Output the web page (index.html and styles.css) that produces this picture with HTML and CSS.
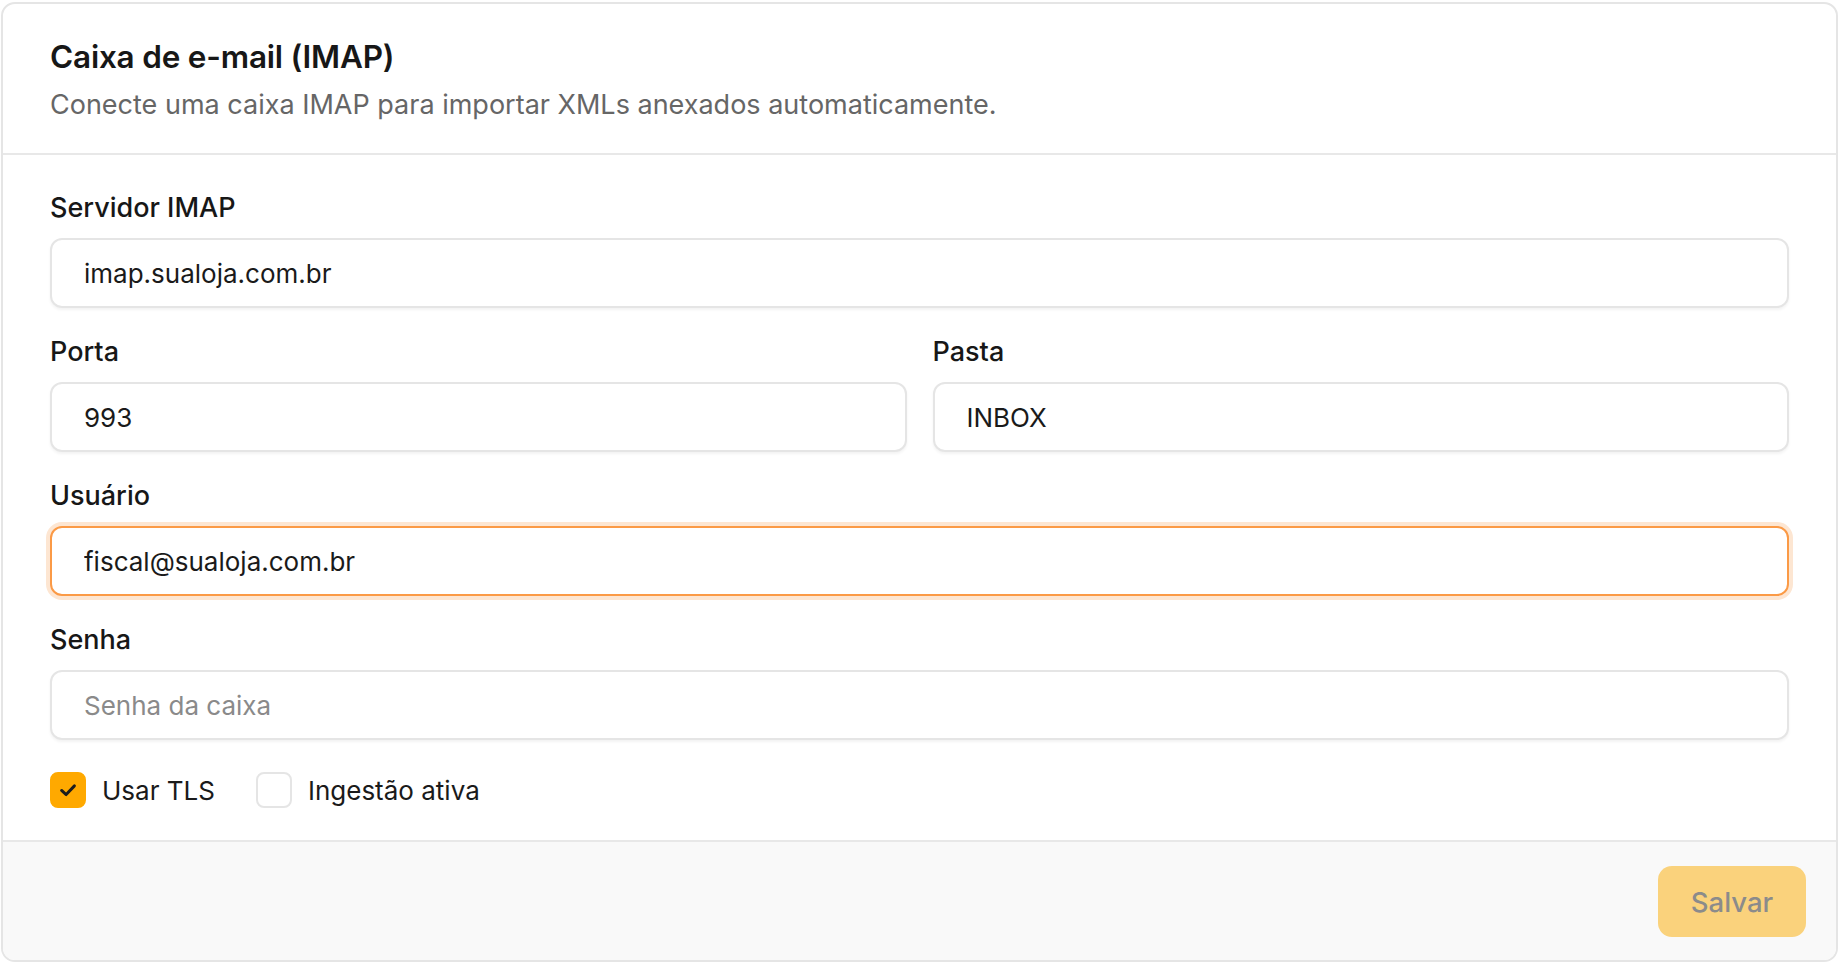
FILE: index.html
```html
<!DOCTYPE html>
<html lang="pt-BR">
	<head>
		<meta charset="UTF-8" />
		<meta name="viewport" content="width=device-width, initial-scale=1.0" />
		<title>Caixa de e-mail (IMAP)</title>
		<link rel="stylesheet" href="styles.css">
	</head>
	<body>
		<form class="card">
			<header class="card-header">
				<h2 class="card-title">Caixa de e-mail (IMAP)</h2>
				<p class="card-desc">Conecte uma caixa IMAP para importar XMLs anexados automaticamente.</p>
			</header>

			<div class="card-body">
				<div class="field">
					<label class="field-label" for="host">Servidor IMAP</label>
					<input class="field-input" id="host" type="text" value="imap.sualoja.com.br" />
				</div>

				<div class="field-row">
					<div class="field">
						<label class="field-label" for="port">Porta</label>
						<input class="field-input" id="port" type="text" value="993" />
					</div>
					<div class="field">
						<label class="field-label" for="folder">Pasta</label>
						<input class="field-input" id="folder" type="text" value="INBOX" />
					</div>
				</div>

				<div class="field">
					<label class="field-label" for="user">Usuário</label>
					<input class="field-input is-focused" id="user" type="text" value="fiscal@sualoja.com.br" />
				</div>

				<div class="field">
					<label class="field-label" for="pass">Senha</label>
					<input class="field-input" id="pass" type="password" placeholder="Senha da caixa" />
				</div>

				<!-- Opções -->
				<div class="options">
					<label class="check">
						<span class="check-box checked">
							<svg viewBox="0 0 24 24" width="22" height="22">
								<path d="M5 12.5 L10 17 L19 7.5" fill="none" stroke="#1c1c1c" stroke-width="3.2" stroke-linecap="round" stroke-linejoin="round" />
							</svg>
						</span>
						<span>Usar TLS</span>
					</label>
					<label class="check">
						<span class="check-box"></span>
						<span>Ingestão ativa</span>
					</label>
				</div>
			</div>

			<footer class="card-footer">
				<button class="btn-save" type="button" disabled>Salvar</button>
			</footer>
		</form>
	</body>
</html>
```

FILE: styles.css
```css
* {
	box-sizing: border-box;
}

body {
	margin: 0;
	padding: 2px 2px 2px 1px;
	background: #ffffff;
	font-family: Inter, "Noto Sans", Arial, sans-serif;
	color: #171717;
}

.card {
	display: flex;
	flex-direction: column;
	height: 960px;
	border: 2px solid #e5e5e5;
	border-radius: 14px;
	background: #ffffff;
	overflow: hidden;
}

/* EN-TETE */
.card-header {
	padding: 35px 47px 30px;
	border-bottom: 2px solid #e8e8e8;
}

.card-title {
	margin: 0;
	font-size: 31.5px;
	line-height: 36px;
	font-weight: 600;
	letter-spacing: -0.2px;
}

.card-desc {
	margin: 12px 0 0;
	font-size: 27px;
	line-height: 36px;
	color: #666666;
}

/* CORPS */
.card-body {
	flex: 1;
	display: flex;
	flex-direction: column;
	gap: 27px;
	padding: 36px 47px 30px;
}

.field {
	display: flex;
	flex-direction: column;
	gap: 14px;
}

.field-row {
	display: grid;
	grid-template-columns: 1fr 1fr;
	gap: 26px;
}

.field-label {
	font-size: 27px;
	line-height: 33px;
	font-weight: 500;
	color: #171717;
}

.field-input {
	height: 70px;
	padding: 0 32px;
	border: 2px solid #e5e5e5;
	border-radius: 12px;
	background: #ffffff;
	box-shadow: 0 2px 3px rgba(0, 0, 0, 0.05);
	font-family: inherit;
	font-size: 26px;
	color: #1a1a1a;
	outline: none;
}

.field-input::placeholder {
	color: #8a8a8a;
}

.field-input.is-focused {
	border-color: #fb9a46;
	box-shadow: 0 0 0 4px #fde6d2;
}

.options {
	display: flex;
	align-items: center;
	gap: 41px;
	margin-top: 5px;
}

.check {
	display: flex;
	align-items: center;
	gap: 16px;
	font-size: 26px;
	color: #1a1a1a;
}

.check-box {
	display: flex;
	align-items: center;
	justify-content: center;
	width: 36px;
	height: 36px;
	border: 2px solid #e5e5e5;
	border-radius: 8px;
	background: #ffffff;
}

.check-box.checked {
	border-color: #ffa900;
	background: #ffa900;
}

/* PIED */
.card-footer {
	display: flex;
	justify-content: flex-end;
	padding: 24px 30px 23px;
	border-top: 2px solid #e8e8e8;
	background: #f9f9f9;
}

.btn-save {
	width: 148px;
	height: 71px;
	border: none;
	border-radius: 14px;
	background: #fad27c;
	font-family: inherit;
	font-size: 27.5px;
	font-weight: 500;
	color: #8b8b8b;
}
```
